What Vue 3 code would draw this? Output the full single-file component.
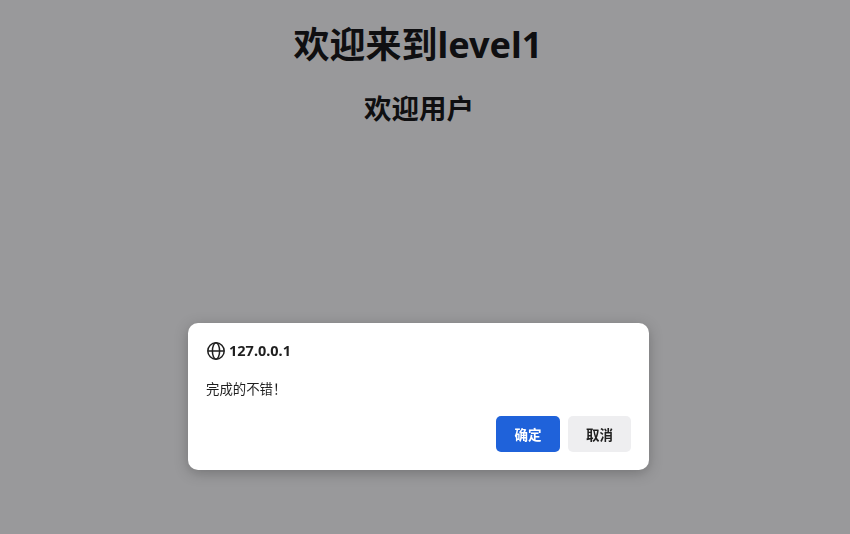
<script setup>
const title = '欢迎来到level1'
const subtitle = '欢迎用户'
const host = '127.0.0.1'
const message = '完成的不错！'
</script>

<template>
  <main class="page">
    <h1 class="title">{{ title }}</h1>
    <h2 class="subtitle">{{ subtitle }}</h2>
  </main>
  <div class="overlay">
    <section class="dialog">
      <header class="head">
        <svg class="globe" viewBox="0 0 20 20" width="20" height="20" fill="none" stroke="#1f1f1f" stroke-width="1.5">
          <circle cx="10" cy="10" r="8.2" />
          <ellipse cx="10" cy="10" rx="3.6" ry="8.2" />
          <path d="M2 10h16" />
        </svg>
        <span class="host">{{ host }}</span>
      </header>
      <p class="message">{{ message }}</p>
      <footer class="actions">
        <button class="btn primary">确定</button>
        <button class="btn secondary">取消</button>
      </footer>
    </section>
  </div>
</template>

<style>
html, body { margin: 0; height: 100%; background: #fff; }
</style>

<style scoped>
.page {
  width: 836px;
  height: 534px;
  text-align: center;
  font-family: "Noto Sans", "Noto Sans CJK SC", sans-serif;
  color: #000;
  overflow: hidden;
}
.title {
  margin: 20px 0 0;
  font-size: 36px;
  line-height: 50px;
  font-weight: 700;
}
.subtitle {
  margin: 20px 0 0;
  padding-left: 2px;
  font-size: 27.5px;
  line-height: 38px;
  font-weight: 700;
}
.overlay {
  position: fixed;
  inset: 0;
  background: rgba(32, 32, 36, 0.46);
  padding: 323px 0 0 188px;
  box-sizing: border-box;
  font-family: "Noto Sans", "Noto Sans CJK SC", sans-serif;
}
.dialog {
  width: 461px;
  height: 147px;
  box-sizing: border-box;
  background: #fff;
  border-radius: 10px;
  padding: 18px;
  box-shadow: 0 3px 14px rgba(0, 0, 0, 0.25);
  display: flex;
  flex-direction: column;
}
.head {
  display: flex;
  align-items: center;
  gap: 3px;
  height: 20px;
}
.globe { flex: none; }
.host {
  margin-top: -2px;
  font-size: 14.5px;
  font-weight: 700;
  color: #1f1f1f;
}
.message {
  margin: 19px 0 0;
  font-size: 13.4px;
  line-height: 18px;
  color: #1f1f1f;
}
.actions {
  margin-top: auto;
  display: flex;
  justify-content: flex-end;
  gap: 8px;
}
.btn {
  width: 64px;
  height: 36px;
  border: 0;
  border-radius: 5px;
  font: 700 13.5px "Noto Sans CJK SC", sans-serif;
  padding: 0;
}
.primary { background: #1f62da; color: #fff; }
.secondary { width: 63px; background: #eeeef0; color: #1f1f1f; }
</style>
